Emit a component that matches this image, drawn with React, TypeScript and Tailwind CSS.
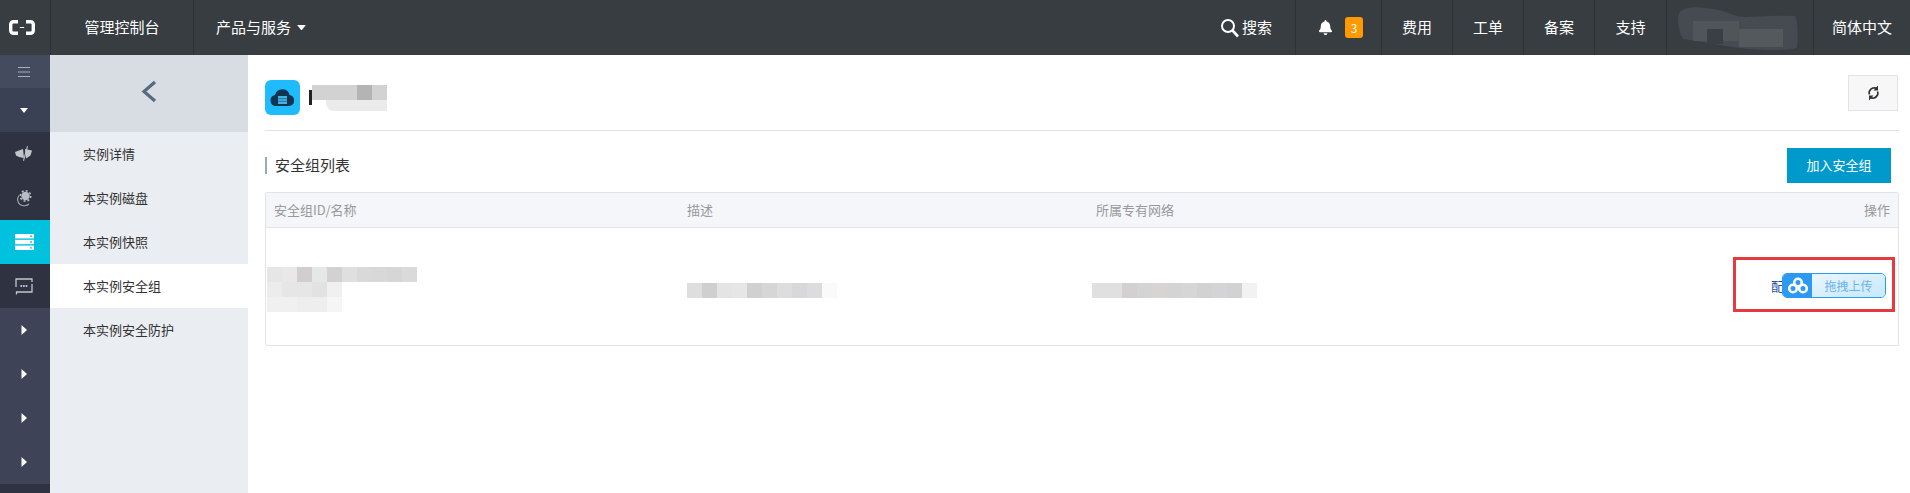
import { FaBell } from "react-icons/fa";

const nameRows = [
  ["#e6e6e6", "#e8e8e8", "#d2cece", "#e4e8e8", "#d3d1d1", "#dfdfdf", "#d9d9d9", "#d8d8d8", "#d6d6d6", "#dadada"],
  ["#ececec", "#e6e6e6", "#e6e6e6", "#e2e2e2", "#f0f0f0"],
  ["#f0f0f0", "#f0f0f0", "#eeeeee", "#eeeeee", "#f5f5f5"],
];
const descCells = ["#dedede", "#cfcfcf", "#e4e4e4", "#e6e6e6", "#d0d0d2", "#d6d6d6", "#dddddd", "#d8d8dc", "#dcdcdc", "#fafafa"];
const netCells = ["#e0e0e0", "#e0e0e0", "#d2d0d0", "#d4d4d4", "#d8d4d4", "#d4d4d4", "#d6d6d6", "#d2d2d2", "#d4d4d6", "#d2d2d2", "#f2f2f2"];

function Mosaic({ rows, cell = 15 }: { rows: string[][]; cell?: number }) {
  return (
    <div className="flex flex-col">
      {rows.map((r, i) => (
        <div key={i} className="flex">
          {r.map((c, j) => (
            <div key={j} style={{ backgroundColor: c, width: cell, height: 15 }} />
          ))}
        </div>
      ))}
    </div>
  );
}

function Logo() {
  return (
    <svg width="26" height="15" viewBox="0 0 26 15" fill="none">
      <path d="M9 1.7H4.5a2.8 2.8 0 0 0-2.8 2.8v6a2.8 2.8 0 0 0 2.8 2.8H9" stroke="#fff" strokeWidth="3.4" />
      <path d="M17 1.7h4.5a2.8 2.8 0 0 1 2.8 2.8v6a2.8 2.8 0 0 1-2.8 2.8H17" stroke="#fff" strokeWidth="3.4" />
      <rect x="10.8" y="7" width="4.4" height="1" fill="#fff" />
    </svg>
  );
}

function TriDown({ color = "#fff", w = 8 }: { color?: string; w?: number }) {
  return (
    <svg width={w} height={w / 2 + 1} viewBox="0 0 8 5">
      <path d="M0 0h8L4 5z" fill={color} />
    </svg>
  );
}

function TriRight() {
  return (
    <svg width="6" height="10" viewBox="0 0 6 10">
      <path d="M0.5 0L6 5 0.5 10z" fill="#fff" />
    </svg>
  );
}

function HeadCell({ label, w }: { label: string; w: string }) {
  return (
    <div className={`${w} h-full flex items-center justify-center border-l border-[#2e3238] text-[15px] text-white`}>
      {label}
    </div>
  );
}

function SideIcon({ children, cls }: { children?: React.ReactNode; cls: string }) {
  return <div className={`h-11 flex items-center justify-center pr-[2px] ${cls}`}>{children}</div>;
}

function CloudBadge() {
  return (
    <div className="w-[35px] h-[35px] rounded-[6px] bg-[#1fbcfd] flex items-center justify-center">
      <svg width="25" height="17" viewBox="0 0 25 17">
        <path d="M6 17a5.5 5.5 0 0 1-1-10.9A7.5 7.5 0 0 1 19.6 6 5.6 5.6 0 0 1 19.5 17z" fill="#0f3550" />
        <rect x="8" y="7" width="9" height="8" fill="#3fb6e8" />
        <path d="M8 9.7h9M8 12.3h9" stroke="#0f3550" strokeWidth="0.5" />
      </svg>
    </div>
  );
}

export default function App() {
  const menu = ["实例详情", "本实例磁盘", "本实例快照", "本实例安全组", "本实例安全防护"];
  return (
    <div className="w-[1910px] h-[493px] overflow-hidden flex flex-col bg-white font-['Noto_Sans_CJK_SC','Noto_Sans',sans-serif]">
      <header className="h-[55px] shrink-0 flex items-stretch bg-[#373d41] text-white">
        <div className="w-[50px] flex items-center justify-center pr-[6px]">
          <Logo />
        </div>
        <div className="w-[143px] flex items-center justify-center border-l border-[#2e3238] text-[15px]">管理控制台</div>
        <div className="pl-[22px] flex items-center gap-[6px] border-l border-[#2e3238] text-[15px]">
          产品与服务
          <TriDown w={9} />
        </div>
        <div className="flex-1" />
        <div className="w-[80px] pl-[5px] flex items-center gap-[2px] text-[15px]">
          <svg width="20" height="20" viewBox="0 0 20 20" fill="none" stroke="#fff" strokeWidth="2">
            <circle cx="8" cy="8" r="6" />
            <path d="M12.5 12.5L18 18.5" strokeWidth="2.6" />
          </svg>
          搜索
        </div>
        <div className="w-[86px] h-full flex items-center pl-[22px] gap-[12px] border-l border-[#2e3238]">
          <FaBell className="text-[15px]" />
          <span className="w-[18px] h-[21px] rounded-[3px] bg-[#ff9900] flex items-center justify-center text-[12px]">3</span>
        </div>
        <HeadCell label="费用" w="w-[71px]" />
        <HeadCell label="工单" w="w-[71px]" />
        <HeadCell label="备案" w="w-[71px]" />
        <HeadCell label="支持" w="w-[72px]" />
        <div className="w-[147px] h-full border-l border-[#2e3238] flex items-center pl-[10px]">
          <svg width="122" height="46" viewBox="0 0 122 46">
            <path d="M2 8C8 0 24 2 36 4c14 2 22 8 30 8 12 0 30-2 52-1 3 4 3 22 2 32-6 2-30 3-48 1C50 42 24 36 6 34 1 26 0 14 2 8z" fill="#454b50" />
            <rect x="16" y="16" width="46" height="20" fill="#4f5559" />
            <rect x="62" y="24" width="44" height="18" fill="#53595d" />
            <rect x="30" y="24" width="16" height="15" fill="#393f44" />
          </svg>
        </div>
        <div className="w-[97px] flex items-center justify-center border-l border-[#2e3238] text-[15px]">简体中文</div>
      </header>

      <div className="flex-1 flex min-h-0">
        <aside className="w-[50px] shrink-0 flex flex-col bg-[#2f3240]">
          <div className="h-[33px] flex items-center justify-center pr-[2px] bg-[#444b5e]">
            <svg width="12" height="12" viewBox="0 0 12 12" stroke="#a8b0bf" strokeWidth="1">
              <path d="M0 1.5h12M0 6h12M0 10.5h12" />
            </svg>
          </div>
          <SideIcon cls="bg-[#3b4155]">
            <TriDown w={8} />
          </SideIcon>
          <SideIcon cls="">
            <svg width="20" height="16" viewBox="0 0 20 16" fill="#c2c6cc">
              <path d="M1 6l8-3 1 9-5-1-3-1.5z" />
              <path d="M11 3l7 1.5-1.5 5-4.5 3z" />
              <path d="M13 0l1 .5L10 15l-1-.5z" fill="#c2c6cc" />
            </svg>
          </SideIcon>
          <SideIcon cls="">
            <svg width="18" height="18" viewBox="0 0 18 18" fill="none">
              <circle cx="10.5" cy="7" r="4.2" fill="#b8bcc4" />
              <circle cx="10.5" cy="7" r="5.2" stroke="#b8bcc4" strokeWidth="1.6" strokeDasharray="2 2" />
              <path d="M4 6.5a6.5 6.5 0 0 0 1 9c3 2 7 1.5 9-.5" stroke="#a4a8b2" strokeWidth="1.1" />
            </svg>
          </SideIcon>
          <SideIcon cls="bg-[#00c1de]">
            <svg width="19" height="16" viewBox="0 0 19 16" fill="#fff">
              <rect width="19" height="4.4" />
              <rect y="5.8" width="19" height="4.4" />
              <rect y="11.6" width="19" height="4.4" />
              <circle cx="16" cy="2.2" r="0.9" fill="#00c1de" />
              <circle cx="16" cy="8" r="0.9" fill="#00c1de" />
              <circle cx="16" cy="13.8" r="0.9" fill="#00c1de" />
            </svg>
          </SideIcon>
          <SideIcon cls="">
            <svg width="18" height="17" viewBox="0 0 18 17" fill="none" stroke="#c2c6cc" strokeWidth="1.3">
              <path d="M1 9V1h16v3" />
              <path d="M17 6v8H1.5v2.5" />
              <path d="M5.5 8h7" strokeDasharray="1.6 1" strokeWidth="1.8" />
            </svg>
          </SideIcon>
          {[0, 1, 2, 3].map((i) => (
            <SideIcon key={i} cls="bg-[#3e4357]">
              <TriRight />
            </SideIcon>
          ))}
        </aside>

        <nav className="w-[198px] shrink-0 flex flex-col bg-[#eaedf1]">
          <div className="h-[77px] bg-[#d8dce3] flex items-center justify-center pb-[5px]">
            <svg width="16" height="23" viewBox="0 0 16 23" fill="none" stroke="#566a80" strokeWidth="3.2">
              <path d="M14 2L3 11.5 14 21" />
            </svg>
          </div>
          {menu.map((m, i) => (
            <div key={m} className={`h-11 flex items-center pl-[33px] text-[13px] text-[#333] ${i === 3 ? "bg-white" : ""}`}>
              {m}
            </div>
          ))}
        </nav>

        <main className="flex-1 min-w-0 pl-[17px] pr-[11px]">
          <div className="h-[76px] flex items-center justify-between border-b border-[#e1e3e6] pr-[1px] pb-[1px]">
            <div className="flex items-center mt-[11px]">
              <CloudBadge />
              <div className="w-[3px] h-[15px] bg-[#222] ml-[9px]" />
              <div className="relative w-[75px] h-[26px]">
                <div className="absolute left-0 top-0 w-[75px] h-[15px] bg-[#d2d2d2]" />
                <div className="absolute left-[45px] top-0 w-[15px] h-[15px] bg-[#b4b4b4]" />
                <div className="absolute left-[14px] top-[15px] w-[61px] h-[11px] rounded-bl-[8px] bg-[#ebebeb]" />
              </div>
            </div>
            <button className="w-[50px] h-[36px] mt-[2px] border border-[#e1e3e6] bg-[#f7f7f7] flex items-center justify-center">
              <svg width="11" height="16" viewBox="0 0 11 16" fill="none" stroke="#333" strokeWidth="1.7">
                <path d="M1.5 9.5a4.5 4.5 0 0 1 0-3.5C3 3 6.5 2 9 3.5" />
                <path d="M9.5 6.5a4.5 4.5 0 0 1 0 3.5C8 13 4.5 14 2 12.5" />
                <path d="M10 0.5v5H5.5z" fill="#333" stroke="none" />
                <path d="M1 15.5v-5h4.5z" fill="#333" stroke="none" />
              </svg>
            </button>
          </div>

          <div className="h-[61px] flex items-center justify-between pt-[7px] pr-[8px]">
            <div className="flex items-center">
              <div className="w-[2px] h-[17px] bg-[#93a9c2]" />
              <span className="ml-[8px] text-[15px] text-[#333]">安全组列表</span>
            </div>
            <button className="w-[104px] h-[35px] bg-[#0099cc] text-white text-[13px]">加入安全组</button>
          </div>

          <div className="border border-[#e1e3e6] rounded-[2px]">
            <div className="h-[35px] bg-[#f4f6f9] border-b border-[#e1e3e6] grid grid-cols-[413px_409px_1fr_80px] items-center text-[13px] text-[#999]">
              <div className="pl-[8px]">安全组ID/名称</div>
              <div className="pl-[8px]">描述</div>
              <div className="pl-[8px]">所属专有网络</div>
              <div className="text-right pr-[8px]">操作</div>
            </div>
            <div className="relative h-[117px] grid grid-cols-[413px_409px_1fr_180px] items-center text-[13px]">
              <div className="pl-[1px] mt-[6px]">
                <Mosaic rows={nameRows} />
              </div>
              <div className="pl-[8px] mt-[8px]">
                <Mosaic rows={[descCells]} />
              </div>
              <div className="pl-[4px] mt-[8px]">
                <Mosaic rows={[netCells]} />
              </div>
              <div className="text-right pr-[75px] text-[#1f4fa0] whitespace-nowrap mt-[-1px]">配置规则</div>

              <div className="absolute right-[3px] top-[29px] w-[162px] h-[55px] border-[3px] border-[#e53a3e]" />
              <div className="absolute right-[12px] top-[45px] w-[104px] h-[25px] rounded-[5px] border border-[#2b9af3] overflow-hidden flex">
                <div className="w-[29px] bg-[#2b9af3] flex items-center justify-center">
                  <svg width="20" height="17" viewBox="0 0 20 17" fill="none" stroke="#fff" strokeWidth="2.6">
                    <circle cx="10" cy="5.5" r="3.8" />
                    <circle cx="5" cy="11.5" r="3.8" />
                    <circle cx="15" cy="11.5" r="3.8" />
                  </svg>
                </div>
                <div className="flex-1 flex items-center justify-center bg-gradient-to-br from-[#eaf6fe] to-[#c6e8fb] text-[12px] text-[#6cb2ea]">
                  拖拽上传
                </div>
              </div>
            </div>
          </div>
        </main>
      </div>
    </div>
  );
}
